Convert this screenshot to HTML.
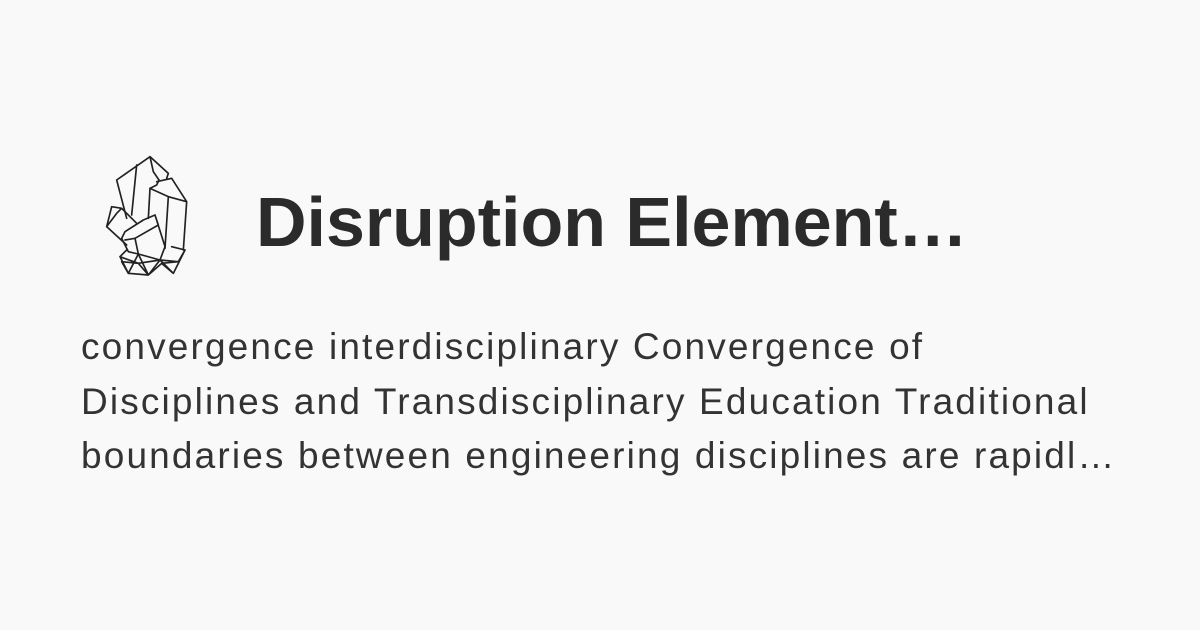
<!DOCTYPE html>
<html><head><meta charset="utf-8"><style>
html,body{margin:0;padding:0}
body{width:1200px;height:630px;background:#f9f9fa;position:relative;overflow:hidden;font-family:"Liberation Sans",sans-serif;color:#2b2b2b}
.t{position:absolute;left:256px;top:182px;font-size:70px;font-weight:bold;white-space:nowrap;line-height:80px}
.b{position:absolute;left:81px;top:320px;width:1100px;font-size:37px;line-height:54.5px;color:#333;letter-spacing:2.15px}
.b div{white-space:nowrap}
svg{position:absolute;left:95px;top:150px}
</style></head><body>
<svg width="100" height="130" viewBox="0 0 300 390" fill="none" stroke="#222" stroke-width="5" stroke-linejoin="round" stroke-linecap="round">
<path d="M65,90 L165,20 L220,70 L215,85 M65,90 L95,205 M125,45 L110,195 M165,20 L175,65 L192,90 L185,105 L165,115 L160,205"/>
<path d="M185,95 L230,85 L275,155 L265,300 M220,140 L275,155 M165,115 L220,140 L210,295"/>
<path d="M50,170 L35,230 L95,285 M50,170 L80,175 L125,220 M80,175 L65,190 L35,230"/>
<path d="M80,265 L90,245 L145,210 L180,195 L210,290 L195,330 L130,312 L100,305 L80,265 M90,270 L120,265 L190,225 L180,195 M120,265 L130,312"/>
<path d="M75,320 L100,370 L160,375 L200,340 L235,370 L270,300 L230,290 M75,320 L95,300 M100,370 L130,312 L160,375 L195,330 L235,370 M100,370 L80,335 L130,340 L160,375 M195,330 L250,335 L270,300 M200,340 L250,335 M130,340 L195,330 M75,320 L130,340"/>
</svg>
<div class="t">Disruption Element…</div>
<div class="b"><div>convergence interdisciplinary Convergence of</div><div>Disciplines and Transdisciplinary Education Traditional</div><div>boundaries between engineering disciplines are rapidl…</div></div>
</body></html>
